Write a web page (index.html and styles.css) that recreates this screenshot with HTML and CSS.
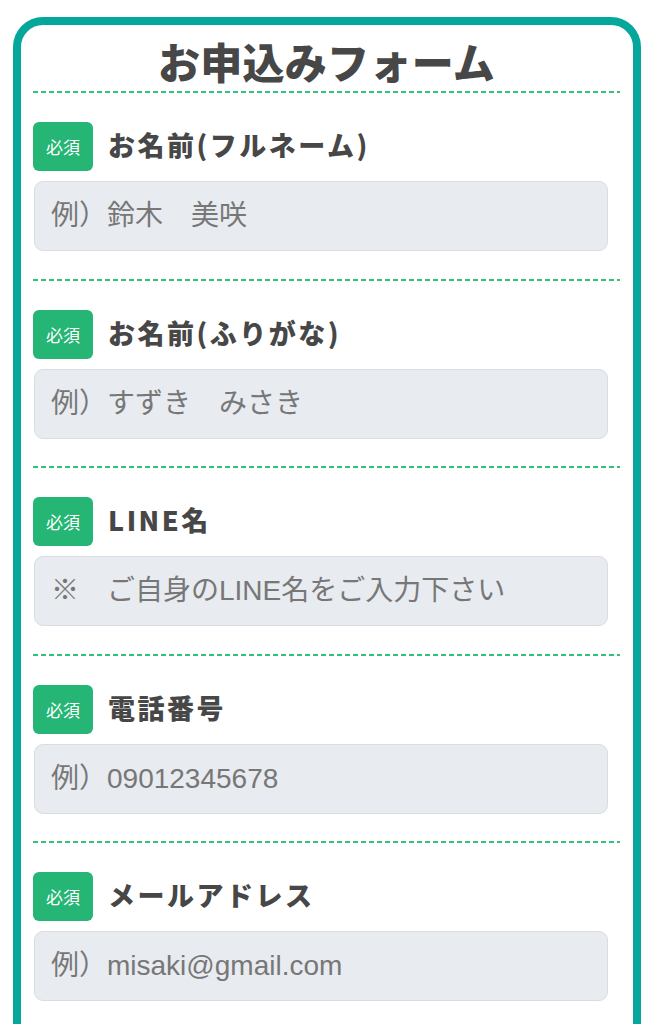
FILE: index.html
```html
<!DOCTYPE html>
<html lang="ja">
<head>
<meta charset="utf-8">
<title>お申込みフォーム</title>
<link rel="stylesheet" href="styles.css">
</head>
<body>
<form class="card">
  <h1 class="title">お申込みフォーム</h1>

  <div class="section">
    <div class="label-row"><span class="badge">必須</span><span class="label">お名前(フルネーム)</span></div>
    <input class="field" type="text" placeholder="例）鈴木　美咲">
  </div>

  <div class="section">
    <div class="label-row"><span class="badge">必須</span><span class="label">お名前(ふりがな)</span></div>
    <input class="field" type="text" placeholder="例）すずき　みさき">
  </div>

  <div class="section">
    <div class="label-row"><span class="badge">必須</span><span class="label">LINE名</span></div>
    <input class="field" type="text" placeholder="※　ご自身のLINE名をご入力下さい">
  </div>

  <div class="section">
    <div class="label-row"><span class="badge">必須</span><span class="label">電話番号</span></div>
    <input class="field" type="tel" placeholder="例）09012345678">
  </div>

  <div class="section">
    <div class="label-row"><span class="badge">必須</span><span class="label">メールアドレス</span></div>
    <input class="field" type="email" placeholder="例）misaki@gmail.com">
  </div>
</form>
</body>
</html>
```

FILE: styles.css
```css
html, body {
  margin: 0;
  padding: 0;
  background: #ffffff;
}

body {
  font-family: "Noto Sans CJK JP", "Noto Sans", sans-serif;
  color: #454545;
}

.card {
  margin: 17px 13px 0 13px;
  border: 8px solid #05a69c;
  border-radius: 30px;
  padding: 11px 13px 60px 12px;
  background: #ffffff;
}

.title {
  margin: 0 0 5px 0;
  font-size: 42px;
  line-height: 50px;
  font-weight: 900;
  text-align: center;
  color: #474747;
  letter-spacing: 0.3px;
}

.section {
  background-image: repeating-linear-gradient(90deg, #33c27c 0 5px, transparent 5px 8px);
  background-repeat: no-repeat;
  background-size: 100% 2px;
  background-position: left top;
  padding-top: 31px;
  padding-bottom: 27.5px;
}

.label-row {
  display: flex;
  align-items: center;
  gap: 15px;
  margin-bottom: 10px;
}

.badge {
  display: flex;
  align-items: center;
  justify-content: center;
  width: 60px;
  height: 49px;
  border-radius: 6px;
  background: #25b574;
  color: #ffffff;
  font-size: 17px;
  font-weight: 400;
}

.label {
  font-size: 27px;
  font-weight: 900;
  letter-spacing: 2.5px;
  color: #474747;
  padding-bottom: 4px;
}

.field {
  display: block;
  box-sizing: border-box;
  width: 574px;
  height: 70px;
  margin: 0 0 0 1px;
  padding: 0 16px;
  border: 1.5px solid #d9dce1;
  border-radius: 9px;
  background: #e8ebf0;
  font-family: "Liberation Sans", "Noto Sans CJK JP", sans-serif;
  font-size: 28px;
  color: #444;
  outline: none;
}

.field::placeholder {
  color: #777777;
  opacity: 1;
}
```
